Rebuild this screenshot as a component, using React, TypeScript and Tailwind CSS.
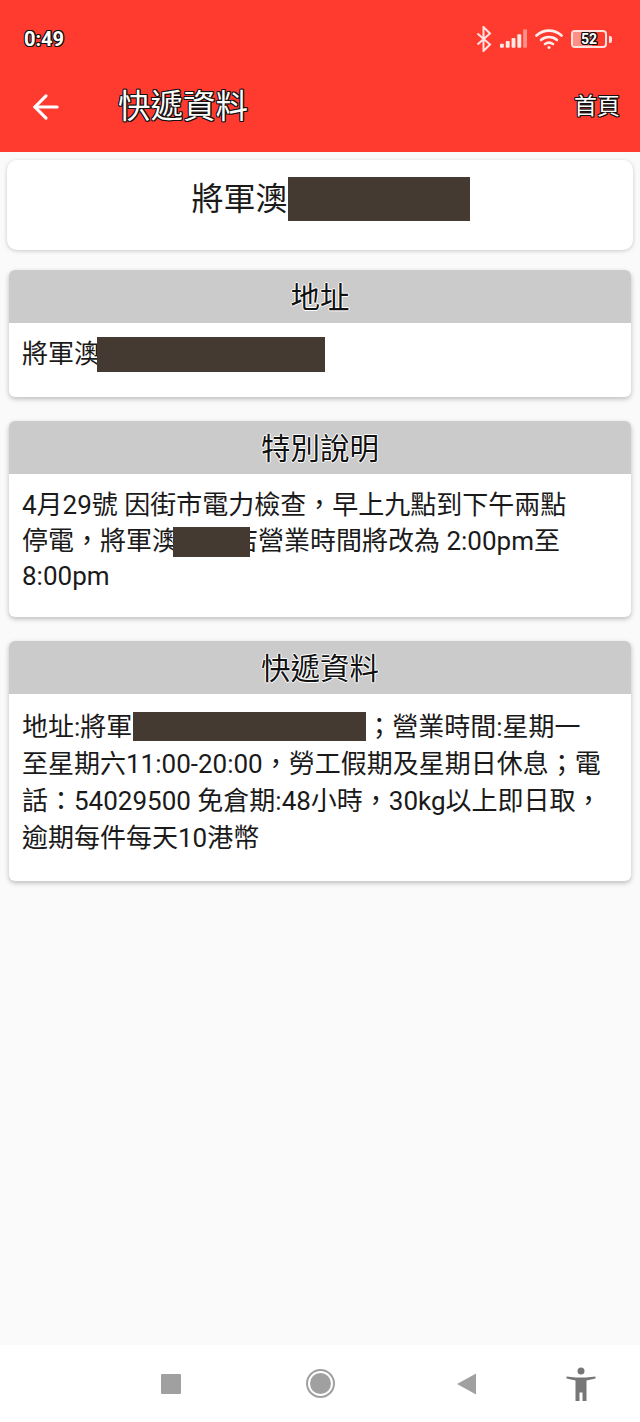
import React from 'react';
import { ArrowLeft } from 'lucide-react';

const outlined =
  'text-white [text-shadow:-1px_0_0_#111,1px_0_0_#111,0_-1px_0_#111,0_1px_0_#111,-1px_-1px_0_#111,1px_1px_0_#111,1px_-1px_0_#111,-1px_1px_0_#111]';
const headingOutline =
  '[text-shadow:-1px_0_0_#fff,1px_0_0_#fff,0_-1px_0_#fff,0_1px_0_#fff]';

const Redact: React.FC<{ className: string }> = ({ className }) => (
  <span className={`inline-block align-middle bg-[#453a32] ${className}`} />
);

const StatusIcons = () => (
  <div className="flex items-center">
    <svg width="16" height="26" viewBox="0 0 16 26" fill="none" stroke="#ffe3e0" strokeWidth="2" className="mr-[8px]">
      <path d="M1.500 7.500 14 18.500 7.500 25V1L14 7.500 1.500 18.500" />
    </svg>
    <svg width="28" height="20" viewBox="0 0 29 20" className="mr-[7px]">
      <rect x="0" y="15" width="4" height="4" rx="1" fill="#ffe9e6" />
      <rect x="6" y="12" width="4" height="7" rx="1" fill="#ffe9e6" />
      <rect x="12" y="9" width="4" height="10" rx="1" fill="#ffe9e6" />
      <rect x="18" y="5" width="4" height="14" rx="1" fill="#ffe9e6" />
      <rect x="24" y="0" width="4" height="19" rx="1" fill="#ff8f85" />
    </svg>
    <svg width="28" height="21" viewBox="0 0 28 21" fill="none" stroke="#ffeeec" strokeWidth="2.600" strokeLinecap="round" className="mr-[8px]">
      <path d="M1.500 6.500C8.500 0 19.500 0 26.500 6.500" />
      <path d="M6 11C10.500 7 17.500 7 22 11" />
      <path d="M10 15C12.500 13.200 15.500 13.200 18 15" />
      <circle cx="14" cy="18.500" r="1.500" fill="#ffeeec" stroke="none" />
    </svg>
    <div className="flex items-center">
      <div className="relative w-[36px] h-[18px] rounded-[4px] border-2 border-[#ffe3e0] overflow-hidden">
        <div className="h-full w-[58%] bg-[#ff8f85]" />
        <span className={`absolute inset-0 flex items-center justify-center text-[14px] font-bold leading-none ${outlined}`}>52</span>
      </div>
      <div className="w-[3px] h-[7px] ml-[2px] rounded-r-[2px] bg-[#ffe3e0]" />
    </div>
  </div>
);

const Section: React.FC<{ title: string; className: string; children: React.ReactNode }> = ({ title, className, children }) => (
  <section className={`mx-[9px] rounded-[6px] bg-white overflow-hidden shadow-[0_2px_5px_rgba(0,0,0,0.25)] ${className}`}>
    <h2 className={`h-[53px] pt-[3px] bg-[#cbcbcb] flex items-center justify-center text-[29.500px] text-[#111] ${headingOutline}`}>{title}</h2>
    {children}
  </section>
);

export default function App() {
  return (
    <div className="w-[640px] h-[1422px] flex flex-col overflow-hidden bg-[#fafafa] font-['Roboto','Noto_Sans_CJK_TC',sans-serif] text-[#1a1a1a]">
      <header className="h-[152px] shrink-0 bg-[#ff3b30]">
        <div className="h-[76px] flex items-center justify-between pl-[24px] pr-[28px] pt-[2px]">
          <span className={`text-[20px] font-bold ${outlined}`}>0:49</span>
          <StatusIcons />
        </div>
        <div className="h-[62px] flex items-center pl-[27px] pr-[20px]">
          <ArrowLeft size={38} strokeWidth={2} color="#fff" />
          <h1 className={`ml-[53px] text-[32.500px] ${outlined}`}>快遞資料</h1>
          <span className={`ml-auto text-[23px] ${outlined}`}>首頁</span>
        </div>
      </header>

      <main className="flex-1 flex flex-col pt-[8px]">
        <div className="mx-[7px] h-[90px] rounded-[10px] bg-white shadow-[0_1px_4px_rgba(0,0,0,0.2)] flex justify-center pt-[17px] pl-[21px] text-[32px] leading-[44px]">
          <span className="flex">
            將軍澳
            <Redact className="w-[182px] h-[44px]" />
          </span>
        </div>

        <Section title="地址" className="mt-[20px] h-[127px]">
          <p className="pl-[13px] pt-[14px] text-[26px] leading-[35px] flex">
            將軍澳
            <Redact className="w-[228px] h-[35px] -ml-[3px]" />
          </p>
        </Section>

        <Section title="特別說明" className="mt-[24px] h-[196px]">
          <p className="pl-[13px] pr-[14px] pt-[14px] text-[26px] leading-[35.500px]">
            4月29號 因街市電力檢查，早上九點到下午兩點
            <br />
            停電，將軍澳
            <Redact className="w-[77px] h-[30px] -mt-[2px] -ml-[5px]" />
            <span className="inline-block w-[8px] h-[35.500px] overflow-hidden align-top">
              <span className="block w-[26px] -ml-[18px]">店</span>
            </span>
            營業時間將改為 2:00pm至8:00pm
          </p>
        </Section>

        <Section title="快遞資料" className="mt-[24px] h-[240px]">
          <p className="pl-[13px] pr-[26px] pt-[15px] text-[26px] leading-[37px]">
            地址:將軍
            <Redact className="w-[233px] h-[29px] -mt-[6px] ml-[1px]" />
            ；營業時間:星期一至星期六11:00-20:00，勞工假期及星期日休息；電話：54029500 免倉期:48小時，30kg以上即日取，逾期每件每天10港幣
          </p>
        </Section>
      </main>

      <nav className="h-[77px] shrink-0 bg-white flex items-center">
        <div className="ml-[161px] w-[20px] h-[20px] rounded-[1px] bg-[#a0a0a0]" />
        <div className="ml-[125px] w-[29px] h-[29px] rounded-full border-2 border-[#a0a0a0] flex items-center justify-center">
          <div className="w-[21px] h-[21px] rounded-full bg-[#a0a0a0]" />
        </div>
        <svg width="20" height="22" viewBox="0 0 20 22" className="ml-[122px]">
          <path d="M0 11 19 0.500V21.500Z" fill="#a0a0a0" />
        </svg>
        <svg width="30" height="34" viewBox="0 0 30 34" className="ml-[89px]">
          <circle cx="15" cy="4" r="3.500" fill="#777" />
          <path d="M0.500 9.500 10 10.500H20L29.500 9.500V11.500L20.500 13.500V34H16.500V25.500H13.500V34H9.500V13.500L0.500 11.500Z" fill="#777" />
        </svg>
      </nav>
    </div>
  );
}
